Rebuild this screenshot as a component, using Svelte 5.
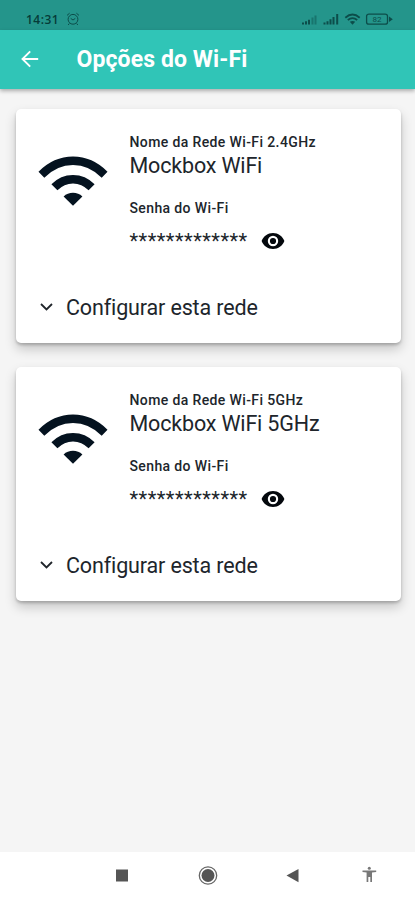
<script>
    let networks = [
        {label: 'Nome da Rede Wi-Fi 2.4GHz', name: 'Mockbox WiFi', password: 'senha-da-rede', visible: false},
        {label: 'Nome da Rede Wi-Fi 5GHz', name: 'Mockbox WiFi 5GHz', password: 'senha-da-rede', visible: false}
    ];

    function togglePassword(i) {
        networks[i].visible = !networks[i].visible;
    }
</script>

<main>
    <div class="status">
        <span class="time">14:31</span>
        <svg class="alarm" width="14" height="14" viewBox="0 0 14 14" fill="none" stroke="currentColor">
            <circle cx="7" cy="7.3" r="4.9"/>
            <path d="M1 3.4 3.6 1.2M10.4 1.2 13 3.4M4.7 6.4 7 8l2.3-1.6M3.3 11.5 2.2 13M10.7 11.5l1.1 1.5"/>
        </svg>
        <svg class="system" width="92" height="14" viewBox="0 0 92 14" fill="none" stroke="currentColor">
            <path d="M1 12.5v-2M4 12.5V9.3M7 12.5V7.8M22.5 12.5v-2M25.5 12.5V9.3M28.5 12.5V7.2" stroke-width="2"/>
            <path d="M10.5 12.5V5.5M13.5 12.5V3.5" stroke-width="2" opacity="0.45"/>
            <path d="M31.5 12.5V5M35.2 12.5V2" stroke-width="2"/>
            <path d="M43.3 5.7Q50.5-.6 57.7 5.7M45.8 8Q50.5 4.2 55.2 8" stroke-width="1.8"/>
            <path d="M47.8 9.8Q50.5 8 53.2 9.8L50.5 12.8Z" fill="currentColor" stroke="none"/>
            <path d="M67 2.2h16q2.5 0 2.5 2v6q0 2-2.5 2H67q-2.4 0-2.4-2v-6q0-2 2.4-2Z" stroke-width="1.3"/>
            <path d="M87 4.5 90.8 7.2 87 10Z" fill="currentColor" stroke="none"/>
            <text x="75" y="10.2" text-anchor="middle">82</text>
        </svg>
    </div>

    <header>
        <button class="back" aria-label="Voltar">
            <svg width="18" height="18" viewBox="0 0 18 18" fill="none" stroke="currentColor" stroke-width="1.9">
                <path d="M17.2 9H1.8M9.2 1.3 1.5 9l7.7 7.7"/>
            </svg>
        </button>
        <h1>Opções do Wi-Fi</h1>
    </header>

    <div class="content">
        {#each networks as network, i}
            <section class="card">
                <div class="info">
                    <svg class="wifi" width="70" height="50" viewBox="0 0 70 50" fill="#04121f">
                        <path d="M.5 15.7Q15.5.5 35 .5T69.5 15.7L63.7 21.7Q51 9 35 9T6.3 21.7Z"/>
                        <path d="M13.4 28.2Q22.5 18.9 35 18.9T56.6 28.2L50.6 34.3Q43.8 27.4 35 27.4T19.4 34.3Z"/>
                        <path d="M25.6 40.4Q29.5 36.7 35 36.7T44.4 40.4L35 49.7Z"/>
                    </svg>
                    <div class="details">
                        <div class="label">{network.label}</div>
                        <div class="name">{network.name}</div>
                        <div class="label second">Senha do Wi-Fi</div>
                        <div class="password">
                            <span class="value">{network.visible ? network.password : '*************'}</span>
                            <button aria-label="Mostrar senha" on:click={() => togglePassword(i)}>
                                <svg width="24" height="16" viewBox="0 0 24 16">
                                    <path fill="#04080d" fill-rule="evenodd" d="M12 0C6.8 0 2.5 3.2.6 8 2.5 12.8 6.8 16 12 16s9.5-3.2 11.4-8C21.5 3.2 17.2 0 12 0Zm0 13.2a5.2 5.2 0 1 1 0-10.4 5.2 5.2 0 0 1 0 10.4ZM12 4.9a3.1 3.1 0 1 0 0 6.2 3.1 3.1 0 0 0 0-6.2Z"/>
                                </svg>
                            </button>
                        </div>
                    </div>
                </div>
                <button class="configure">
                    <svg width="13" height="8" viewBox="0 0 13 8" fill="none" stroke="currentColor" stroke-width="1.8">
                        <path d="m1 1 5.5 5.5L12 1"/>
                    </svg>
                    <span>Configurar esta rede</span>
                </button>
            </section>
        {/each}
    </div>

    <nav>
        <svg width="415" height="48" viewBox="0 0 415 48" fill="#555">
            <path d="M116 17.5h12v12h-12z"/>
            <circle cx="208" cy="23.5" r="6.5"/>
            <circle cx="208" cy="23.5" r="8.7" fill="none" stroke="#666" stroke-width="1.3"/>
            <path d="M286.5 23.5 298.5 17v13.2Z"/>
            <circle cx="369.3" cy="16.2" r="1.5" fill="#777"/>
            <path fill="#777" d="M362.5 18.5h13.7v1.5l-4.2.5v9.5h-1.7v-5h-2v5h-1.7v-9.5l-4.1-.5Z"/>
        </svg>
    </nav>
</main>

<style>
    :global(body) {
        margin: 0;
    }

    main {
        display: flex;
        flex-direction: column;
        height: 900px;
        background-color: #f5f5f5;
        color: #20252b;
        font-family: Roboto, sans-serif;
        overflow: hidden;
    }

    button {
        display: flex;
        padding: 0;
        border: none;
        background: none;
        color: inherit;
        font: inherit;
        cursor: pointer;
    }

    .status {
        display: flex;
        flex: none;
        align-items: center;
        box-sizing: border-box;
        height: 30px;
        padding: 8px 21px 0 26px;
        background-color: #24958b;
        color: #0c4d4a;
    }

    .time {
        color: #063b38;
        font-family: "Open Sans", sans-serif;
        font-size: 12px;
        font-weight: 600;
        letter-spacing: 0.5px;
    }

    .alarm {
        margin-left: 6.5px;
    }

    .system {
        margin-left: auto;
    }

    .system text {
        font-size: 8px;
        fill: currentColor;
        stroke: none;
    }

    header {
        display: flex;
        flex: none;
        align-items: center;
        height: 58.5px;
        padding-left: 21px;
        background-color: #30c5b7;
        color: #ffffff;
        box-shadow: 0 2px 4px rgba(0, 0, 0, 0.3);
    }

    h1 {
        margin: 0 0 0 37.5px;
        font-size: 23px;
        font-weight: 700;
        letter-spacing: 0.1px;
        white-space: nowrap;
    }

    .content {
        display: flex;
        flex: 1;
        flex-direction: column;
        gap: 24px;
        padding: 20.5px 14px 0 15.5px;
    }

    .card {
        box-sizing: border-box;
        height: 234px;
        padding: 24px 22px 0;
        border-radius: 5px;
        background-color: #ffffff;
        box-shadow: 0 6px 12px rgba(0, 0, 0, 0.2), 0 2px 3px rgba(0, 0, 0, 0.2);
    }

    .info {
        display: flex;
        height: 158px;
    }

    .wifi {
        flex: none;
        margin-top: 23px;
    }

    .details {
        margin-left: 22px;
        white-space: nowrap;
    }

    .label {
        font-size: 14px;
        font-weight: 500;
        line-height: 18px;
        letter-spacing: 0.38px;
    }

    .name {
        font-size: 21.5px;
        font-weight: 400;
        line-height: 30px;
        letter-spacing: -0.17px;
    }

    .second {
        margin-top: 18px;
    }

    .password {
        display: flex;
        align-items: center;
        height: 30px;
        margin-top: 9px;
    }

    .value {
        width: 131px;
        font-size: 20px;
        line-height: 30px;
        letter-spacing: 0.48px;
    }

    .configure {
        align-items: center;
        height: 32px;
        margin-left: 2.5px;
        font-size: 21.5px;
        font-weight: 400;
        letter-spacing: -0.14px;
    }

    .configure span {
        margin-left: 13px;
    }

    nav {
        flex: none;
        height: 48px;
        background-color: #ffffff;
    }
</style>
